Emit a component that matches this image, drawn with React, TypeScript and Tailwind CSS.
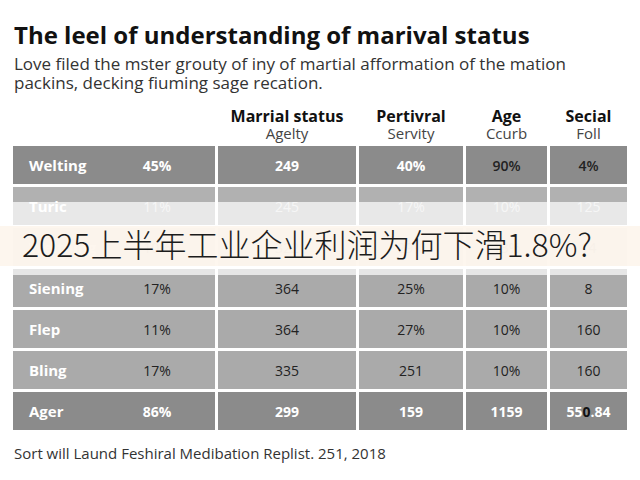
const font = { fontFamily: '"Open Sans", "Noto Sans", sans-serif' };

type Row = {
  label: string;
  values: string[];
  tone: "dark" | "light" | "mid";
};

const rows: Row[] = [
  { label: "Welting", values: ["45%", "249", "40%", "90%", "4%"], tone: "dark" },
  { label: "Turic", values: ["11%", "245", "17%", "10%", "125"], tone: "mid" },
  { label: "Weltning", values: ["10%", "322", "29%", "13%", "14"], tone: "light" },
  { label: "Siening", values: ["17%", "364", "25%", "10%", "8"], tone: "light" },
  { label: "Flep", values: ["11%", "364", "27%", "10%", "160"], tone: "light" },
  { label: "Bling", values: ["17%", "335", "251", "10%", "160"], tone: "light" },
  { label: "Ager", values: ["86%", "299", "159", "1159", "550.84"], tone: "dark" },
];

const cols = "grid grid-cols-[202px_138px_104px_81px_77px] gap-x-[3px]";

function cellBg(tone: Row["tone"]) {
  if (tone === "dark") return "bg-[#8b8b8b]";
  if (tone === "mid") return "bg-[#b1b1b1]";
  return "bg-[#aaaaaa]";
}

function valueColor(row: Row, i: number) {
  if (row.tone === "mid") return "text-[#e2e2e2] font-normal";
  if (row.tone === "dark") {
    if (row.label === "Welting" && i >= 3) return "text-[#222] font-semibold";
    return "text-white font-bold";
  }
  return "text-[#222] font-normal";
}

function TableRow({ row }: { row: Row }) {
  const bg = cellBg(row.tone);
  return (
    <div className={`${cols} h-[38px]`}>
      <div className={`${bg} grid grid-cols-[96px_64px] items-center pl-4`}>
        <span className="text-[15px] font-bold text-white">{row.label}</span>
        <span className={`text-center text-[14px] ${valueColor(row, 0)}`}>
          {row.values[0]}
        </span>
      </div>
      {row.values.slice(1).map((v, i) => (
        <div
          key={i}
          className={`${bg} flex items-center justify-center text-[14px] ${valueColor(row, i + 1)}`}
        >
          {v === "550.84" ? (
            <span>
              55<span className="text-[#111]">0</span>.84
            </span>
          ) : (
            v
          )}
        </div>
      ))}
    </div>
  );
}

const headers = [
  ["Marrial status", "Agelty"],
  ["Pertivral", "Servity"],
  ["Age", "Ccurb"],
  ["Secial", "Foll"],
];

export default function App() {
  return (
    <div className="relative h-[480px] w-[640px] overflow-hidden bg-white pl-[13px] pt-[20px] text-[#111]" style={font}>
      <h1 className="pl-[1px] text-[24px] font-bold leading-[30px] text-[#111]">
        The leel of understanding of marival status
      </h1>
      <p className="mt-[4px] pl-[1px] text-[17px] leading-[19px] text-[#333]">
        Love filed the mster grouty of iny of martial afformation of the mation
        <br />
        packins, decking fiuming sage recation.
      </p>

      <div className={`${cols} mt-[15px] mb-[5px]`}>
        <div />
        {headers.map(([h, s]) => (
          <div key={h} className="flex flex-col items-center">
            <span className="text-[16px] font-bold leading-[18px] text-[#111]">{h}</span>
            <span className="text-[15px] leading-[16px] text-[#444]">{s}</span>
          </div>
        ))}
      </div>

      <div className="relative flex flex-col gap-y-[3px]">
        {rows.map((r) => (
          <TableRow key={r.label} row={r} />
        ))}

        <div className="absolute -left-[13px] right-0 top-[56px] h-[73px] bg-white/70">
          <div
            className="mt-[24px] flex h-[40px] items-center bg-[#fdf5ec]/90 pb-[6px] pl-[22px] text-[32px] font-light leading-none text-[#1c1c1c]"
            style={{ fontFamily: '"Noto Sans CJK SC", "Noto Sans", sans-serif' }}
          >
            2025上半年工业企业利润为何下滑1.8%?
          </div>
        </div>
      </div>

      <p className="mt-[13px] pl-[1px] text-[15px] leading-[20px] text-[#333]">
        Sort will Laund Feshiral Medibation Replist. 251, 2018
      </p>
    </div>
  );
}
